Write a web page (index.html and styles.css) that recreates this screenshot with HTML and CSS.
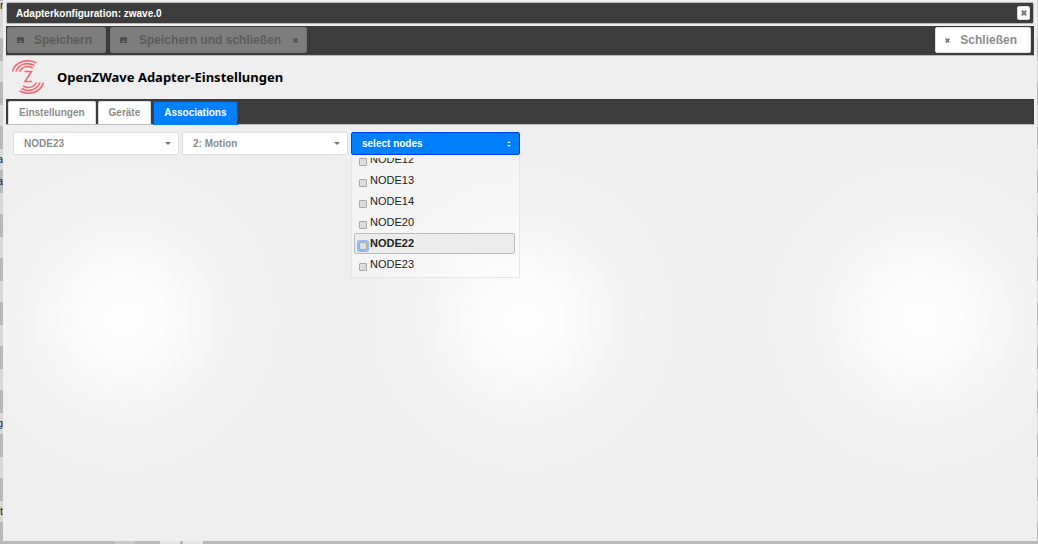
FILE: index.html
```
<!DOCTYPE html>
<html lang="de">
<head>
    <meta charset="UTF-8">
    <meta name="viewport" content="width=device-width, initial-scale=1.0">
    <title>Adapterkonfiguration: zwave.0</title>
    <link rel="stylesheet" href="styles.css">
</head>
<body>
    <!-- list behind the dialog -->
    <div class="backdrop">
        <span class="peek peek-1">r</span>
        <span class="peek peek-2">a</span>
        <span class="peek peek-3">a</span>
        <span class="peek peek-4">g</span>
        <span class="peek peek-5">t</span>
        <span class="stub stub-1"></span>
        <span class="stub stub-2"></span>
        <span class="stub stub-3"></span>
    </div>

    <div class="dialog">
        <div class="titlebar">
            <span>Adapterkonfiguration: zwave.0</span>
            <button class="close" aria-label="close">
                <svg class="icon" viewBox="0 0 6 6"><path d="M.8 .8L5.2 5.2M5.2 .8L.8 5.2"/></svg>
            </button>
        </div>

        <div class="toolbar">
            <button class="btn" disabled>
                <svg class="disk" viewBox="0 0 7 6"><path fill-rule="evenodd" d="M0 1L1 0H6L7 1V6H0ZM2 4V5H5V4Z"/></svg>
                <span>Speichern</span>
            </button>
            <button class="btn" disabled>
                <svg class="disk" viewBox="0 0 7 6"><path fill-rule="evenodd" d="M0 1L1 0H6L7 1V6H0ZM2 4V5H5V4Z"/></svg>
                <span>Speichern und schließen</span>
                <svg class="icon small" viewBox="0 0 6 6"><path d="M.8 .8L5.2 5.2M5.2 .8L.8 5.2"/></svg>
            </button>
            <button class="btn btn-close">
                <svg class="icon small" viewBox="0 0 6 6"><path d="M.8 .8L5.2 5.2M5.2 .8L.8 5.2"/></svg>
                <span>Schließen</span>
            </button>
        </div>

        <div class="header">
            <svg class="logo" viewBox="0 0 32 34">
                <path d="M.5 11.500C3 2 15-2 24.500 3M4 11.500C7 4 15 1.500 22.500 5.500M7.500 11.500C10 7 15 5 21 8"/>
                <path d="M31.500 22.500C29 32 17 36 7.500 31M28 22.500C25 30 17 32.500 9.500 28.500M24.500 22.500C22 27 17 29 11 26"/>
                <path d="M12.500 11.500H19.500L13 21.500H20"/>
            </svg>
            <h1>OpenZWave Adapter-Einstellungen</h1>
        </div>

        <div class="tabs">
            <button class="tab">Einstellungen</button>
            <button class="tab">Geräte</button>
            <button class="tab active">Associations</button>
        </div>

        <div class="content">
            <div class="field">
                <select aria-label="Node">
                    <option>NODE23</option>
                </select>
            </div>
            <div class="field">
                <select aria-label="Group">
                    <option>2: Motion</option>
                </select>
            </div>
            <div class="multi">
                <button class="multi-button" aria-expanded="true">
                    <span>select nodes</span>
                    <svg viewBox="0 0 4 6"><path d="M2 0L4 2H0ZM0 4H4L2 6Z"/></svg>
                </button>
                <div class="menu">
                    <div class="menu-list">
                        <label class="item"><input type="checkbox">NODE12</label>
                        <label class="item"><input type="checkbox">NODE13</label>
                        <label class="item"><input type="checkbox">NODE14</label>
                        <label class="item"><input type="checkbox">NODE20</label>
                        <label class="item hover"><input type="checkbox">NODE22</label>
                        <label class="item"><input type="checkbox">NODE23</label>
                    </div>
                </div>
            </div>
        </div>
    </div>
</body>
</html>
```

FILE: styles.css
```
* {
    box-sizing: border-box;
}
body {
    margin: 0;
    height: 100vh;
    padding: 0 1px 3px 3px;
    overflow: hidden;
    font-family: "Liberation Sans", Arial, sans-serif;
    font-size: 11px;
    background: #b8b8b8;
}
button, select {
    font-family: inherit;
    font-weight: bold;
    margin: 0;
}

/* striped list behind the dialog */
.backdrop {
    position: absolute;
    inset: 0;
    overflow: hidden;
    background: repeating-linear-gradient(#d8d8d8 0, #d8d8d8 21px, #b8b8b8 21px, #b8b8b8 44px) 0 17px;
}
.peek {
    position: absolute;
    left: -3px;
    line-height: 14px;
    color: #223;
}
.peek-1 { top: -2px; left: 0; }
.peek-2 { top: 152px; }
.peek-3 { top: 174px; }
.peek-4 { top: 416px; }
.peek-5 { top: 504px; left: 0; }
.stub {
    position: absolute;
    bottom: 0;
    height: 4px;
    width: 20px;
    background: #e6e6e6;
}
.stub-1 { left: 115px; background: #c8c8c8; }
.stub-2 { left: 160px; }
.stub-3 { left: 183px; }

.dialog {
    position: relative;
    height: 100%;
    padding: 2px 3px;
    background: radial-gradient(circle at 200px 318px, #fdfdfd 0, #fbfbfb 40px, #f3f3f3 105px, #efefef 155px, #eee 200px) -78px 0 / 398px 100%;
}

.titlebar {
    display: flex;
    align-items: center;
    justify-content: space-between;
    height: 22px;
    padding: 0 3px 0 9px;
    border: 1px solid #bbb;
    border-radius: 2px;
    background: #3c3c3c;
    color: #fff;
    font-size: 10px;
    font-weight: bold;
}
.close {
    display: flex;
    align-items: center;
    justify-content: center;
    width: 13px;
    height: 14px;
    padding: 0;
    border: 1px solid #ddd;
    border-radius: 2px;
    background: #fff;
}
.icon {
    width: 6px;
    height: 6px;
    fill: none;
    stroke: #777;
    stroke-width: 2;
}
.small {
    width: 5px;
    height: 5px;
}
.disk {
    width: 7px;
    height: 6px;
    fill: #505050;
}

.toolbar {
    display: flex;
    gap: 4px;
    height: 30px;
    margin-top: 2px;
    padding: 1px 3px 2px 1px;
    border-bottom: 1px solid #bbb;
    background: #3c3c3c;
}
.btn {
    display: flex;
    align-items: center;
    gap: 10px;
    padding: 0 13px 0 9px;
    border: 1px solid #767676;
    border-radius: 2px;
    background: #7d7d7d;
    color: #5c5c5c;
    font-size: 12px;
}
.btn:nth-child(2) {
    gap: 12px;
    padding: 0 8px 0 9px;
}
.btn:disabled .icon {
    stroke: #505050;
}
.btn-close {
    margin-left: auto;
    border-color: #ddd;
    background: #fff;
    color: #8c8c8c;
}

.header {
    display: flex;
    align-items: center;
    gap: 13px;
    height: 43px;
    padding: 0 6px 2px;
}
.logo {
    width: 32px;
    height: 34px;
    fill: none;
    stroke: #fb6672;
    stroke-width: 1.6;
}
h1 {
    margin: 0;
    font-family: "Noto Sans", "Open Sans", sans-serif;
    font-size: 13px;
    font-weight: bold;
    color: #000;
}

.tabs {
    display: flex;
    gap: 2px;
    height: 26px;
    padding: 2px 2px 0;
    border-bottom: 1px solid #bbb;
    background: #3c3c3c;
}
.tab {
    height: 23px;
    padding: 0 10px 1px;
    border: 1px solid #ddd;
    border-bottom: 0;
    border-radius: 2px 2px 0 0;
    background: #fff;
    color: #8c8c8c;
    font-size: 10px;
}
.tab.active {
    height: 24px;
    padding-bottom: 2px;
    border-color: #003eff;
    background: #007fff;
    color: #fff;
}

.content {
    display: flex;
    gap: 3px;
    padding: 7px;
}
.field {
    position: relative;
    width: 166px;
}
.field::after {
    content: "";
    position: absolute;
    top: 10px;
    right: 8px;
    border: 3px solid transparent;
    border-top-color: #777;
    border-bottom: 0;
    pointer-events: none;
}
select {
    appearance: none;
    width: 100%;
    height: 23px;
    padding: 0 10px;
    border: 1px solid #ddd;
    border-radius: 2px;
    background: #fff;
    color: #8c8c8c;
    font-size: 10px;
}
.multi {
    position: relative;
    width: 169px;
}
.multi-button {
    display: flex;
    align-items: center;
    justify-content: space-between;
    width: 100%;
    height: 23px;
    padding: 0 8px 0 10px;
    border: 1px solid #003eff;
    border-radius: 2px;
    background: #007fff;
    color: #fff;
    font-size: 10px;
}
.multi-button svg {
    width: 4px;
    height: 6px;
    fill: #cfe5ff;
}
.menu {
    position: absolute;
    top: 23px;
    left: 0;
    width: 100%;
    padding: 3px 4px 2px 2px;
    border: 1px solid #e6e6e6;
    border-top: 0;
    background: rgba(255, 255, 255, .35);
}
.menu-list {
    display: flex;
    flex-direction: column;
    justify-content: flex-end;
    height: 117px;
    overflow: hidden;
}
.item {
    display: flex;
    flex: none;
    align-items: center;
    height: 21px;
    padding: 0 4px 2px;
    border: 1px solid transparent;
    color: #222;
}
.item.hover {
    border-color: #bbb;
    border-radius: 2px;
    background: #ececec;
    font-weight: bold;
}
.item input {
    appearance: none;
    width: 8px;
    height: 8px;
    margin: 7px 3px 0 0;
    border: 1px solid #aaa;
    border-radius: 1px;
    background: #ddd;
}
.item.hover input {
    outline: 2px solid #8bbcf5;
}
```
